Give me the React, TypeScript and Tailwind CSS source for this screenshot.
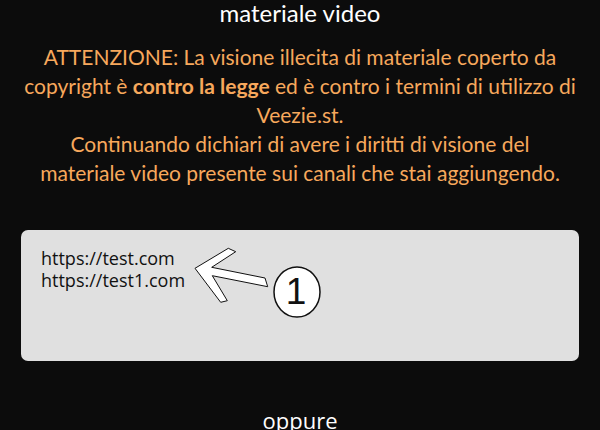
export default function App() {
  return (
    <div className="w-[600px] h-[430px] overflow-hidden bg-[#0c0c0c] font-['Lato',sans-serif]">
      <div className="flex flex-col items-center">
        <p className="-mt-[3px] text-[24px] leading-[32px] text-white">materiale video</p>

        <p className="mt-[13px] text-center text-[21px] leading-[29px] text-[#f7a85c]">
          ATTENZIONE: La visione illecita di materiale coperto da
          <br />
          copyright è <b className="font-bold">contro la legge</b> ed è contro i termini di utilizzo di
          <br />
          Veezie.st.
          <br />
          Continuando dichiari di avere i diritti di visione del
          <br />
          materiale video presente sui canali che stai aggiungendo.
        </p>

        <div className="relative mt-[43px] h-[131px] w-[558px] rounded-[7px] bg-[#e0e0e0] pl-[20px] pt-[17px]">
          <p className="font-['Open_Sans',sans-serif] text-[18px] leading-[22px] text-[#111]">
            https://test.com
            <br />
            https://test1.com
          </p>

          <svg
            className="absolute left-0 top-0"
            width="558"
            height="131"
            viewBox="0 0 558 131"
          >
            <polygon
              points="174,38.3 207.3,18.3 214.7,21.7 190.7,37.3 244,48 246.7,56.7 191.3,45.7 206.3,70.7 199.7,72.3"
              fill="#ffffff"
              stroke="#111"
              strokeWidth="1"
            />
            <ellipse cx="276" cy="62" rx="23" ry="25" fill="#ffffff" stroke="#111" strokeWidth="1.5" />
            <text
              x="275"
              y="74"
              textAnchor="middle"
              fontFamily="'Liberation Sans', Arial, sans-serif"
              fontSize="37"
              fill="#111"
            >
              1
            </text>
          </svg>
        </div>

        <p className="mt-[44px] font-['Open_Sans',sans-serif] text-[22px] leading-[30px] text-white">
          oppure
        </p>
      </div>
    </div>
  );
}
